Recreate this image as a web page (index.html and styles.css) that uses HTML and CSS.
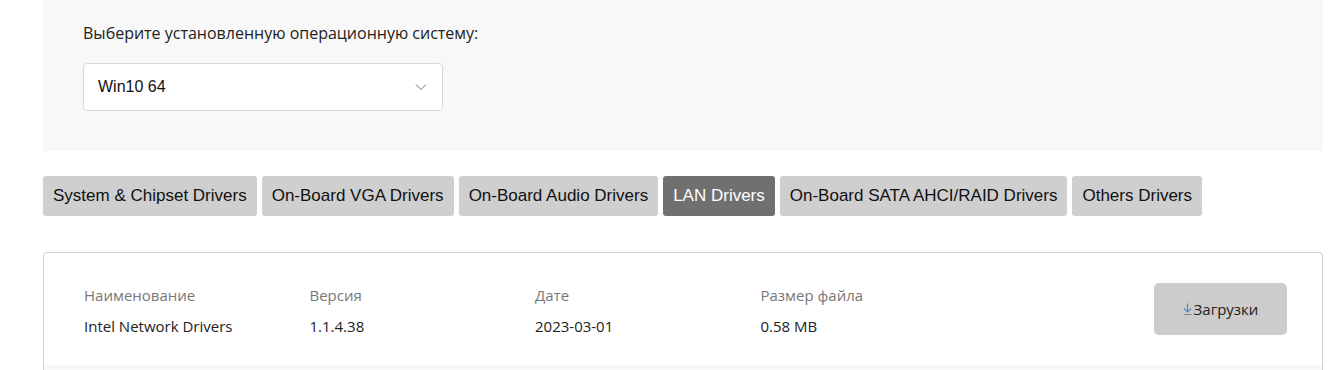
FILE: index.html
```html
<!DOCTYPE html>
<html lang="ru">
<head>
    <meta charset="UTF-8">
    <meta name="viewport" content="width=device-width, initial-scale=1.0">
    <title>Драйверы</title>
    <link rel="stylesheet" href="styles.css">
</head>
<body>
<div class="wrap">
    <div class="os-panel">
        <label class="os-label" for="os">Выберите установленную операционную систему:</label>
        <div class="select-box">
            <span class="select-value">Win10 64</span>
            <svg class="chevron" width="12" height="8" viewBox="0 0 12 8"><path d="M1 1.5 L6 6.5 L11 1.5" fill="none" stroke="#6a7080" stroke-width="1"/></svg>
        </div>
    </div>

    <div class="tabs">
        <button class="tab">System &amp; Chipset Drivers</button>
        <button class="tab">On-Board VGA Drivers</button>
        <button class="tab">On-Board Audio Drivers</button>
        <button class="tab active">LAN Drivers</button>
        <button class="tab">On-Board SATA AHCI/RAID Drivers</button>
        <button class="tab">Others Drivers</button>
    </div>

    <div class="card">
        <div class="row">
            <div class="col">
                <div class="col-title">Наименование</div>
                <div class="col-value">Intel Network Drivers</div>
            </div>
            <div class="col">
                <div class="col-title">Версия</div>
                <div class="col-value">1.1.4.38</div>
            </div>
            <div class="col">
                <div class="col-title">Дате</div>
                <div class="col-value">2023-03-01</div>
            </div>
            <div class="col">
                <div class="col-title">Размер файла</div>
                <div class="col-value">0.58 MB</div>
            </div>
            <button class="download">
                <svg class="arrow" width="9" height="12" viewBox="0 0 9 12"><path d="M4.5 0.5 V9 M1 5.5 L4.5 9 L8 5.5" fill="none" stroke="#4f86cc" stroke-width="1.1"/><path d="M0.5 11.5 H8.5" stroke="#888" stroke-width="1"/></svg>Загрузки
            </button>
        </div>
        <div class="row alt"></div>
    </div>
</div>
</body>
</html>
```

FILE: styles.css
```css
body {
    margin: 0;
    font-family: "Open Sans", "Noto Sans", sans-serif;
    color: #222;
    background: #fff;
}

.wrap {
    width: 1280px;
    margin-left: 43px;
}

.os-panel {
    background-color: #f8f8f8;
    height: 151px;
    padding: 22px 40px 0;
    box-sizing: border-box;
}

.os-label {
    display: block;
    font-size: 16px;
    line-height: 22px;
    color: #222;
    height: 41px;
}

.select-box {
    width: 360px;
    height: 48px;
    background: #fff;
    border: 1px solid #d8d8d8;
    border-radius: 4px;
    box-sizing: border-box;
    display: flex;
    align-items: center;
    justify-content: space-between;
    padding: 0 15px 0 14px;
}

.select-value {
    font-family: "Liberation Sans", Arial, sans-serif;
    font-size: 16px;
    color: #111;
}

.tabs {
    display: flex;
    gap: 5px;
    margin-top: 25px;
}

.tab {
    height: 40px;
    padding: 0 10px;
    background-color: #cfcfcf;
    color: #111;
    border: none;
    border-radius: 3px;
    font-family: "Liberation Sans", Arial, sans-serif;
    font-size: 17px;
    cursor: pointer;
}

.tab.active {
    background-color: #707070;
    color: #fff;
}

.card {
    margin-top: 36px;
    border: 1px solid #d0d0d0;
    border-radius: 4px;
    overflow: hidden;
}

.row {
    display: flex;
    align-items: center;
    padding: 0 35px 0 40px;
    height: 112px;
    box-sizing: border-box;
}

.row.alt {
    background-color: #f8f8f8;
}

.col {
    width: 225.5px;
    font-size: 15px;
    line-height: 20px;
    margin-top: 3px;
}

.col-title {
    color: #777;
    margin-bottom: 11px;
}

.col-value {
    color: #222;
}

.download {
    margin-left: auto;
    width: 133px;
    height: 52px;
    background-color: #cccccc;
    border: none;
    border-radius: 5px;
    font-family: "Open Sans", "Noto Sans", sans-serif;
    font-size: 15px;
    color: #222;
    cursor: pointer;
    display: flex;
    align-items: center;
    justify-content: center;
    gap: 2px;
}

.arrow {
    margin-top: -1px;
}
```
